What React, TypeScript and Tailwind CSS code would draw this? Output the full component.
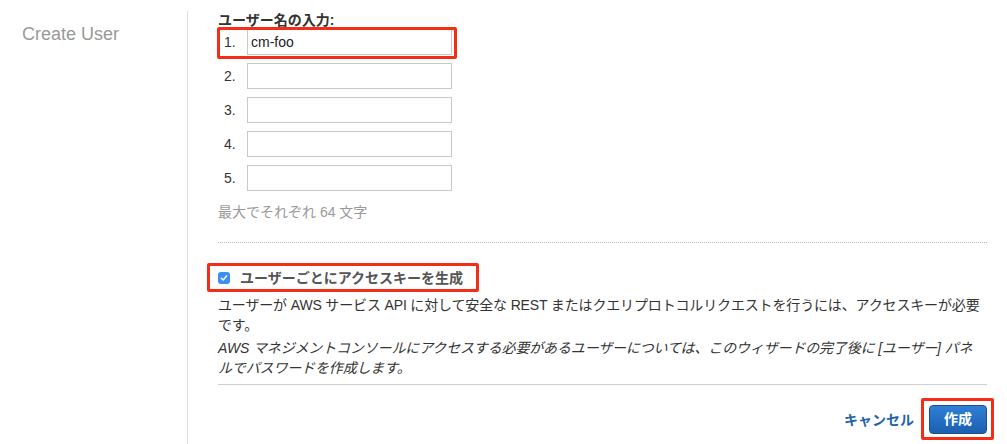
import React from "react";

const font = "font-['Liberation_Sans','Noto_Sans_CJK_JP',sans-serif]";

function Row({ n, value }: { n: number; value?: string }) {
  return (
    <div className="flex items-center h-[26px] pl-[6px]">
      <span className="w-[23px] text-[14px] text-[#333] leading-[26px]">{n}.</span>
      <div className="w-[205px] h-[26px] border border-[#c8c8c8] bg-white pl-[3px] text-[14px] leading-[24px] text-[#222]">
        {value}
      </div>
    </div>
  );
}

export default function App() {
  return (
    <div className={`w-[1007px] h-[444px] bg-white flex overflow-hidden ${font}`}>
      <div className="w-[187px] shrink-0 pl-[22px] pt-[22px]">
        <div className="text-[18px] leading-[24px] text-[#999]">Create User</div>
      </div>
      <div className="mt-[11px] border-l border-[#dcdcdc] pl-[30px] pr-[20px] flex-1 flex flex-col pt-[1px]">
        <div className="text-[14px] font-bold text-[#333] leading-[16px]">ユーザー名の入力:</div>
        <div className="mt-[1px] flex flex-col gap-[8px]">
          <div className="relative w-[234px]">
            <Row n={1} value="cm-foo" />
            <div className="absolute -left-[1px] -top-[2px] -right-[5px] -bottom-[4px] border-[3px] border-[#f52c16] rounded-[2px] pointer-events-none" />
          </div>
          <Row n={2} />
          <Row n={3} />
          <Row n={4} />
          <Row n={5} />
        </div>
        <div className="mt-[11px] text-[14px] leading-[20px] text-[#999]">最大でそれぞれ 64 文字</div>
        <div className="mt-[20px] border-t border-dotted border-[#bbb]" />
        <div className="relative mt-[25px] self-start inline-flex items-center h-[20px]">
          <span className="w-[12px] h-[12px] rounded-[3px] bg-[#3b8ff0] flex items-center justify-center">
            <svg width="8" height="8" viewBox="0 0 8 8" fill="none">
              <path d="M1.3 4.2 L3.2 6 L6.7 1.8" stroke="white" strokeWidth="1.4" strokeLinecap="round" strokeLinejoin="round" />
            </svg>
          </span>
          <span className="ml-[10px] text-[14px] font-bold text-[#555] leading-[20px]">ユーザーごとにアクセスキーを生成</span>
          <div className="absolute -left-[11px] -top-[5px] -right-[16px] -bottom-[4px] border-[3px] border-[#f52c16] rounded-[2px] pointer-events-none" />
        </div>
        <p className="mt-[7px] text-[14px] leading-[20px] text-[#333] whitespace-nowrap tracking-[-0.15px]">
          ユーザーが AWS サービス API に対して安全な REST またはクエリプロトコルリクエストを行うには、アクセスキーが必要
          <br />
          です。
        </p>
        <p className="mt-[3px] text-[14px] leading-[20px] text-[#333] italic whitespace-nowrap tracking-[-0.15px]">
          AWS マネジメントコンソールにアクセスする必要があるユーザーについては、このウィザードの完了後に [ユーザー] パネ
          <br />
          ルでパスワードを作成します。
        </p>
        <div className="mt-[6px] border-t border-[#cfcfcf]" />
        <div className="mt-[20px] flex justify-end items-center gap-[15px]">
          <span className="text-[14px] font-bold text-[#1f62ad] leading-[20px]">キャンセル</span>
          <div className="relative">
            <div className="w-[58px] h-[29px] rounded-[4px] border border-[#1a4f91] bg-gradient-to-b from-[#2f80d6] to-[#1c5fb0] flex items-center justify-center text-[14px] font-bold text-white">
              作成
            </div>
            <div className="absolute -left-[8px] -top-[7px] -right-[7px] -bottom-[6px] border-[3px] border-[#f52c16] rounded-[2px] pointer-events-none" />
          </div>
        </div>
      </div>
    </div>
  );
}
